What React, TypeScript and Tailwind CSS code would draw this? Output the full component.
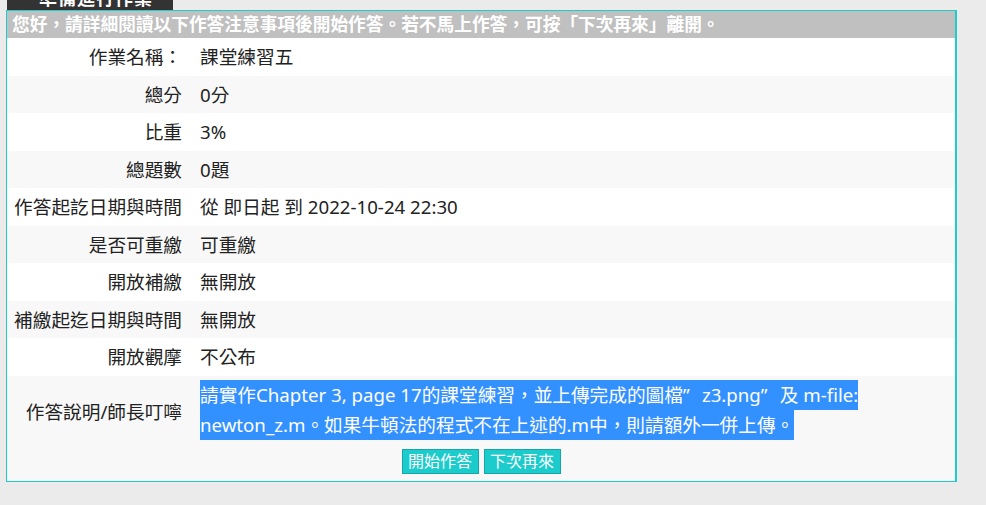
import React from 'react';

const rows = [
  { label: '作業名稱：', value: '課堂練習五', h: 'h-[38px]', bg: 'bg-white' },
  { label: '總分', value: '0分', h: 'h-[37px]', bg: 'bg-[#f8f8f8]' },
  { label: '比重', value: '3%', h: 'h-[38px]', bg: 'bg-white' },
  { label: '總題數', value: '0題', h: 'h-[37px]', bg: 'bg-[#f8f8f8]' },
  { label: '作答起訖日期與時間', value: '從 即日起 到 2022-10-24 22:30', h: 'h-[38px]', bg: 'bg-white' },
  { label: '是否可重繳', value: '可重繳', h: 'h-[37px]', bg: 'bg-[#f8f8f8]' },
  { label: '開放補繳', value: '無開放', h: 'h-[38px]', bg: 'bg-white' },
  { label: '補繳起迄日期與時間', value: '無開放', h: 'h-[37px]', bg: 'bg-[#f8f8f8]' },
  { label: '開放觀摩', value: '不公布', h: 'h-[38px]', bg: 'bg-white' },
];

const font = "font-['Noto_Sans','Noto_Sans_CJK_TC',sans-serif]";

// full-width closing quote, as the original page renders it
const Quote = () => <span className="inline-block w-[19px]">”</span>;

export default function App() {
  return (
    <div className={`min-h-screen bg-[#ebebeb] ${font} text-[#222]`}>
      {/* tab cut off at the top */}
      <div className="ml-[7px] w-[166px] h-[10px] bg-[#333] overflow-hidden">
        <div className="-mt-[13px] pl-[32px] text-[18px] leading-[22px] font-bold text-white tracking-[1px]">
          準備進行作業
        </div>
      </div>

      <div className="ml-[6px] w-[951px] border border-r-2 border-[#1dcdcd]">
        <div className="h-[27px] bg-[#c0c0c0] pl-[5px] text-[17.7px] leading-[27px] font-bold text-white whitespace-nowrap">
          您好，請詳細閱讀以下作答注意事項後開始作答。若不馬上作答，可按「下次再來」離開。
        </div>

        {rows.map((row, i) => (
          <div key={i} className={`flex items-center ${row.h} ${row.bg} text-[18.67px]`}>
            <div className="w-[175px] text-right whitespace-nowrap">{row.label}</div>
            <div className="pl-[18px] whitespace-nowrap">{row.value}</div>
          </div>
        ))}

        <div className="bg-[#f8f8f8] h-[105px] pt-[4px]">
          <div className="flex items-center text-[18.67px]">
            <div className="w-[175px] text-right whitespace-nowrap pt-[3px]">作答說明/師長叮嚀</div>
            <div className="pl-[18px]">
              <div className="w-fit h-[30px] leading-[30px] bg-[#3390ff] text-white whitespace-nowrap">
                請實作Chapter 3, page 17的課堂練習，並上傳完成的圖檔<Quote />z3.png<Quote />及 m-file:
              </div>
              <div className="w-fit h-[30px] leading-[30px] bg-[#3390ff] text-white whitespace-nowrap">
                newton_z.m。如果牛頓法的程式不在上述的.m中，則請額外一併上傳。
              </div>
            </div>
          </div>
          <div className="flex justify-center gap-[5px] mt-[9px]">
            <button className="w-[77px] h-[25px] bg-[#1ccbcb] border border-[#14a8a8] text-white text-[16px] leading-[23px]">
              開始作答
            </button>
            <button className="w-[77px] h-[25px] bg-[#1ccbcb] border border-[#14a8a8] text-white text-[16px] leading-[23px]">
              下次再來
            </button>
          </div>
        </div>
      </div>
    </div>
  );
}
